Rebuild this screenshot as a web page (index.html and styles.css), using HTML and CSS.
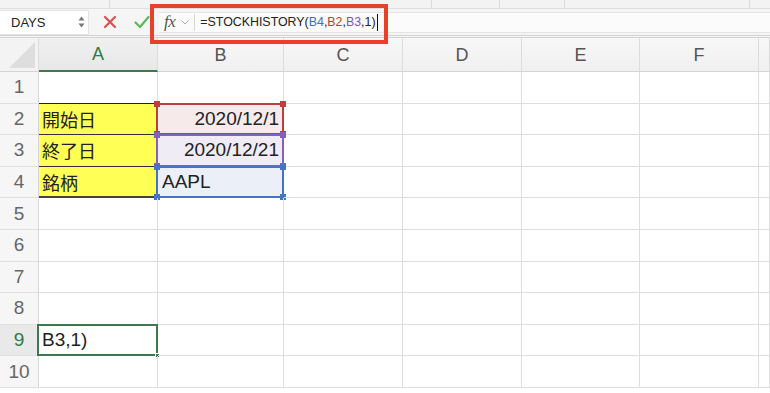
FILE: index.html
```html
<!DOCTYPE html>
<html lang="ja">
<head>
  <meta charset="utf-8">
  <title>STOCKHISTORY</title>
  <link rel="stylesheet" href="styles.css">
</head>
<body>
  <div class="app">
    <div class="toolbar">
      <span class="tb" style="width:110px"></span>
      <span class="tb" style="width:322px"></span>
      <span class="tb" style="width:68px"></span>
      <span class="tb" style="width:65px"></span>
      <span class="tb" style="width:185px"></span>
    </div>

    <div class="formula-bar">
      <div class="name-box">
        <span class="name">DAYS</span>
        <span class="spin">
          <svg width="7" height="12" viewBox="0 0 7 12"><path d="M3.5 0.5 L6.5 4.5 H0.5 Z M3.5 11.5 L6.5 7.5 H0.5 Z" fill="#777"/></svg>
        </span>
      </div>
      <div class="fb-btn cancel">
        <svg width="14" height="14" viewBox="0 0 14 14"><path d="M2 2 L12 12 M12 2 L2 12" stroke="#d9534f" stroke-width="2.2" stroke-linecap="round"/></svg>
      </div>
      <div class="fb-btn enter">
        <svg width="16" height="14" viewBox="0 0 16 14"><path d="M1.5 7.5 L6 12 L14.5 2" stroke="#5cb85c" stroke-width="2.2" fill="none" stroke-linecap="round" stroke-linejoin="round"/></svg>
      </div>
      <div class="fx-field">
        <span class="fx">fx</span>
        <svg class="chev" width="8" height="5" viewBox="0 0 8 5"><path d="M0.5 0.5 L4 4 L7.5 0.5" stroke="#aaa" fill="none"/></svg>
        <span class="fx-sep"></span>
        <span class="formula">=STOCKHISTORY(<span class="r-blue">B4</span>,<span class="r-red">B2</span>,<span class="r-purple">B3</span>,1)<span class="caret"></span></span>
      </div>
      <div class="callout"></div>
    </div>

    <div class="sheet">
      <div class="corner"><span class="tri"></span></div>
      <div class="col-head active">A</div>
      <div class="col-head">B</div>
      <div class="col-head">C</div>
      <div class="col-head">D</div>
      <div class="col-head">E</div>
      <div class="col-head">F</div>
      <div class="col-head"></div>

      <div class="row-head">1</div>
      <div class="cell"></div><div class="cell"></div><div class="cell"></div><div class="cell"></div><div class="cell"></div><div class="cell"></div><div class="cell"></div>

      <div class="row-head">2</div>
      <div class="cell label first">開始日</div>
      <div class="cell num ref ref-red">2020/12/1<span class="box"><i class="h tl"></i><i class="h tr"></i><i class="h bl"></i><i class="h br"></i></span></div>
      <div class="cell"></div><div class="cell"></div><div class="cell"></div><div class="cell"></div><div class="cell"></div>

      <div class="row-head">3</div>
      <div class="cell label">終了日</div>
      <div class="cell num ref ref-purple">2020/12/21<span class="box"><i class="h tl"></i><i class="h tr"></i><i class="h bl"></i><i class="h br"></i></span></div>
      <div class="cell"></div><div class="cell"></div><div class="cell"></div><div class="cell"></div><div class="cell"></div>

      <div class="row-head">4</div>
      <div class="cell label last">銘柄</div>
      <div class="cell ref ref-blue">AAPL<span class="box"><i class="h tl"></i><i class="h tr"></i><i class="h bl"></i><i class="h br"></i></span></div>
      <div class="cell"></div><div class="cell"></div><div class="cell"></div><div class="cell"></div><div class="cell"></div>

      <div class="row-head">5</div>
      <div class="cell"></div><div class="cell"></div><div class="cell"></div><div class="cell"></div><div class="cell"></div><div class="cell"></div><div class="cell"></div>

      <div class="row-head">6</div>
      <div class="cell"></div><div class="cell"></div><div class="cell"></div><div class="cell"></div><div class="cell"></div><div class="cell"></div><div class="cell"></div>

      <div class="row-head">7</div>
      <div class="cell"></div><div class="cell"></div><div class="cell"></div><div class="cell"></div><div class="cell"></div><div class="cell"></div><div class="cell"></div>

      <div class="row-head">8</div>
      <div class="cell"></div><div class="cell"></div><div class="cell"></div><div class="cell"></div><div class="cell"></div><div class="cell"></div><div class="cell"></div>

      <div class="row-head active">9</div>
      <div class="cell selected">B3,1)<span class="sel"><i class="fill"></i></span></div>
      <div class="cell"></div><div class="cell"></div><div class="cell"></div><div class="cell"></div><div class="cell"></div><div class="cell"></div>

      <div class="row-head">10</div>
      <div class="cell"></div><div class="cell"></div><div class="cell"></div><div class="cell"></div><div class="cell"></div><div class="cell"></div><div class="cell"></div>
    </div>
  </div>
</body>
</html>
```

FILE: styles.css
```css
* {
  margin: 0;
  padding: 0;
  box-sizing: border-box;
}
body {
  background-color: #ffffff;
  font-family: 'Liberation Sans', 'Noto Sans CJK JP', sans-serif;
  color: #222;
}
.app {
  width: 770px;
  height: 393px;
  overflow: hidden;
}

/* ribbon remnant on top */
.toolbar {
  display: flex;
  height: 9px;
  background-color: #f3f3f3;
  border-bottom: 1px solid #e0e0e0;
}
.tb {
  border-right: 1px solid #dcdcdc;
}

/* formula bar */
.formula-bar {
  position: relative;
  display: flex;
  align-items: center;
  height: 29px;
  background-color: #f5f5f5;
  border-bottom: 3px double #d4d4d4;
}
.name-box {
  display: flex;
  align-items: center;
  justify-content: space-between;
  width: 89px;
  height: 25px;
  padding: 0 3px 0 11px;
  background-color: #ffffff;
  border: 1px solid #e2e2e2;
  border-left: none;
  font-size: 13px;
  color: #222;
}
.spin {
  display: flex;
}
.fb-btn {
  display: flex;
  justify-content: center;
  width: 32px;
}
.fb-btn.cancel {
  margin-left: 5px;
}
.fx-field {
  display: flex;
  align-items: center;
  flex: 1;
  height: 21px;
  margin-left: 1px;
  background-color: #fbfbfb;
  border-top: 1px solid #e4e4e4;
  border-bottom: 1px solid #e4e4e4;
}
.fx {
  margin-left: 5px;
  font-family: 'Liberation Serif', serif;
  font-style: italic;
  font-size: 17px;
  color: #555;
  letter-spacing: -0.5px;
}
.chev {
  margin-left: 6px;
}
.fx-sep {
  width: 1px;
  height: 17px;
  margin-left: 5px;
  background-color: #d6d6d6;
}
.formula {
  display: flex;
  align-items: center;
  margin-left: 5px;
  font-size: 12.4px;
  color: #222;
}
.r-blue { color: #3f6fc6; }
.r-red { color: #c0393b; }
.r-purple { color: #7a55b3; }
.caret {
  width: 1px;
  height: 17px;
  margin-left: 1px;
  background-color: #111;
}
.callout {
  position: absolute;
  left: 150px;
  top: -5px;
  width: 238px;
  height: 40px;
  border: 4px solid #e8412b;
}

/* sheet grid */
.sheet {
  display: grid;
  grid-template-columns: 39px 119px 126px 119px 119px 118px 119px 1fr;
  grid-template-rows: 34px repeat(10, 31.6px);
  font-size: 19px;
}
.corner {
  position: relative;
  background-color: #f3f3f3;
  border-right: 1px solid #dcdcdc;
  border-bottom: 1px solid #d4d4d4;
}
.tri {
  position: absolute;
  right: 3px;
  bottom: 3px;
  width: 0;
  height: 0;
  border-left: 26px solid transparent;
  border-bottom: 26px solid #dedede;
}
.col-head {
  display: flex;
  align-items: center;
  justify-content: center;
  padding-top: 1px;
  background: linear-gradient(#f7f7f7, #f0f0f0);
  border-right: 1px solid #dcdcdc;
  border-bottom: 1px solid #d4d4d4;
  font-size: 18px;
  color: #555;
}
.col-head.active {
  background: linear-gradient(#f0f0f0, #e8e8e8);
  border-bottom: 2px solid #3c7a4e;
  color: #2e7a48;
}
.row-head {
  display: flex;
  align-items: center;
  justify-content: center;
  background-color: #f6f6f6;
  border-right: 1px solid #d6d6d6;
  border-bottom: 1px solid #e0e0e0;
  color: #666;
}
.row-head.active {
  background-color: #e9e9e9;
  color: #2e7a48;
}
.cell {
  position: relative;
  display: flex;
  align-items: center;
  padding: 0 4px;
  border-right: 1px solid #dedede;
  border-bottom: 1px solid #dedede;
  color: #222;
  white-space: nowrap;
}
.cell.num {
  justify-content: flex-end;
}
.cell.label {
  padding-left: 3px;
  background-color: #ffff55;
  border-bottom: 1px solid #333;
  border-right: 1px solid #d8d850;
  font-size: 18px;
}
.cell.label.first {
  border-top: 1px solid #222;
  margin-top: -1px;
}
.cell.label.last {
  border-bottom: 2px solid #444;
}

/* range references drawn over the cells */
.ref-red { background-color: #f6eaea; }
.ref-purple { background-color: #efecf6; }
.ref-blue { background-color: #eaeff8; }
.box {
  position: absolute;
  left: -2px;
  top: -1px;
  right: -1px;
  bottom: -1px;
  border: 2px solid;
}
.ref-red .box { border-color: #bf3d3d; color: #bf3d3d; }
.ref-purple .box { border-color: #8661bb; color: #8661bb; }
.ref-blue .box { border-color: #4673c6; color: #4673c6; }
.h {
  position: absolute;
  width: 6px;
  height: 6px;
  background-color: currentColor;
}
.h.tl { left: -4px; top: -4px; }
.h.tr { right: -4px; top: -4px; }
.h.bl { left: -4px; bottom: -4px; }
.h.br { right: -4px; bottom: -4px; }

.cell.selected {
  padding-left: 3px;
}
.sel {
  position: absolute;
  left: -2px;
  top: -1px;
  right: -1px;
  bottom: -1px;
  border: 2px solid #3c7a4e;
}
.fill {
  position: absolute;
  right: -4px;
  bottom: -4px;
  width: 5px;
  height: 5px;
  background-color: #3c7a4e;
  border: 1px solid #ffffff;
}
```
